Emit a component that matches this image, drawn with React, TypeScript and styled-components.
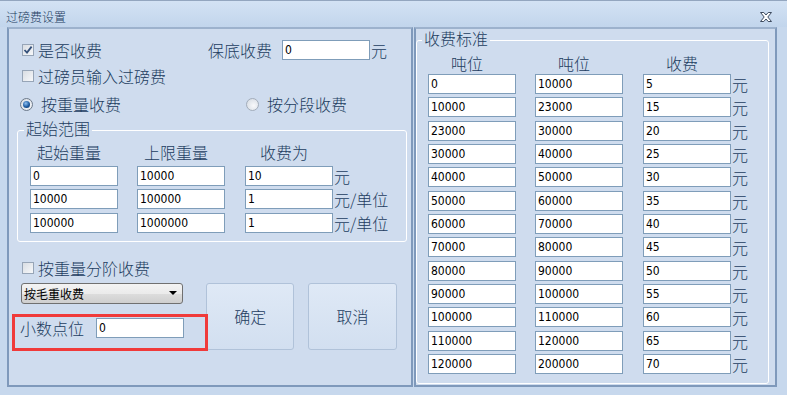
import React from "react";
import styled, { createGlobalStyle } from "styled-components";

const CJK = `"Noto Sans CJK SC", "Noto Sans", sans-serif`;
const NUM = `"DejaVu Sans Condensed", "Liberation Sans", sans-serif`;
const INK = "#223c60";

const GlobalStyle = createGlobalStyle`
  html, body {
    margin: 0;
    padding: 0;
  }
  body {
    width: 787px;
    height: 395px;
    overflow: hidden;
    background: #c7d8ed;
  }
`;

const rangeRows = [
  ["0", "10000", "10", "元"],
  ["10000", "100000", "1", "元/单位"],
  ["100000", "1000000", "1", "元/单位"],
];

const feeRows = [
  ["0", "10000", "5"],
  ["10000", "23000", "15"],
  ["23000", "30000", "20"],
  ["30000", "40000", "25"],
  ["40000", "50000", "30"],
  ["50000", "60000", "35"],
  ["60000", "70000", "40"],
  ["70000", "80000", "45"],
  ["80000", "90000", "50"],
  ["90000", "100000", "55"],
  ["100000", "110000", "60"],
  ["110000", "120000", "65"],
  ["120000", "200000", "70"],
];

const CheckBox: React.FC<{ checked?: boolean }> = ({ checked }) => (
  <Box>
    {checked && (
      <svg width="10" height="10" viewBox="0 0 10 10">
        <path d="M1.5 5 L4 7.6 L8.6 1.6" fill="none" stroke="#34507a" strokeWidth="1.8" />
      </svg>
    )}
  </Box>
);

const CloseIcon = () => (
  <svg width="12" height="10" viewBox="0 0 12 10">
    <polygon
      points="0.5,0.5 3.8,0.5 6,3 8.2,0.5 11.5,0.5 7.8,5 11.5,9.5 8.2,9.5 6,7 3.8,9.5 0.5,9.5 4.2,5"
      fill="#ffffff"
      stroke="#3d4b5f"
      strokeWidth="1"
    />
  </svg>
);

const App: React.FC = () => {
  return (
    <Window>
      <GlobalStyle />
      <TitleBar>
        <span>过磅费设置</span>
        <CloseIcon />
      </TitleBar>
      <Body>
        <Panel $w={406}>
          <Row $top={11}>
            <CheckItem $w={186}>
              <CheckBox checked />
              <Label>是否收费</Label>
            </CheckItem>
            <Label style={{ width: 74 }}>保底收费</Label>
            <TextBox readOnly value="0" />
            <Unit>元</Unit>
          </Row>
          <Row $top={6}>
            <CheckItem $w={186}>
              <CheckBox />
              <Label>过磅员输入过磅费</Label>
            </CheckItem>
          </Row>
          <Row $top={8} $left={11}>
            <RadioItem $w={226}>
              <Radio $on />
              <Label>按重量收费</Label>
            </RadioItem>
            <RadioItem>
              <Radio />
              <Label>按分段收费</Label>
            </RadioItem>
          </Row>

          <Group $w={390} $ml={8} $mt={5} $pl={12} $pb={8}>
            <Legend>起始范围</Legend>
            <Grid $cols="107px 108px 88px auto" $gap={3.5}>
              <Head>起始重量</Head>
              <Head>上限重量</Head>
              <Head>收费为</Head>
              <span />
              {rangeRows.map((r, i) => (
                <React.Fragment key={i}>
                  <TextBox readOnly value={r[0]} />
                  <TextBox readOnly value={r[1]} />
                  <TextBox readOnly value={r[2]} />
                  <Unit>{r[3]}</Unit>
                </React.Fragment>
              ))}
            </Grid>
          </Group>

          <Row $top={16}>
            <CheckItem $w={186}>
              <CheckBox />
              <Label>按重量分阶收费</Label>
            </CheckItem>
          </Row>

          <Bottom>
            <BottomLeft>
              <Select>
                <span>按毛重收费</span>
                <Arrow />
              </Select>
              <DecimalRow>
                <Label style={{ width: 76 }}>小数点位</Label>
                <TextBox readOnly value="0" />
              </DecimalRow>
            </BottomLeft>
            <Button $w={88}>确定</Button>
            <Button $w={89}>取消</Button>
          </Bottom>
          <Highlight />
        </Panel>

        <Panel $w={363}>
          <Group $w={353} $ml={0} $mt={0} $pl={11} $pb={9}>
            <Legend>收费标准</Legend>
            <HeadRow>
              <Head>吨位</Head>
              <Head style={{ marginLeft: 19 }}>吨位</Head>
              <Head style={{ marginLeft: 20 }}>收费</Head>
            </HeadRow>
            <Grid $cols="107px 108px 88px auto" $gap={3.33}>
              {feeRows.map((r, i) => (
                <React.Fragment key={i}>
                  <TextBox readOnly value={r[0]} />
                  <TextBox readOnly value={r[1]} />
                  <TextBox readOnly value={r[2]} />
                  <Unit>元</Unit>
                </React.Fragment>
              ))}
            </Grid>
          </Group>
        </Panel>
      </Body>
    </Window>
  );
};
export default App;

const Window = styled.div`
  width: 787px;
  height: 395px;
  box-sizing: border-box;
  display: flex;
  flex-direction: column;
  background: #c7d8ed;
  border-top: 1px solid #93a6bf;
  font-family: ${CJK};
  font-weight: 300;
  color: ${INK};
`;

const TitleBar = styled.div`
  height: 26px;
  flex: none;
  box-sizing: border-box;
  display: flex;
  align-items: center;
  justify-content: space-between;
  padding: 5px 15px 0 6px;
  background: linear-gradient(#d3e2f4, #c2d5ec);
  font-size: 12px;
  line-height: 14px;
`;

const Body = styled.div`
  flex: 1;
  display: flex;
  gap: 1px;
  padding: 0 10px 8px 7px;
  min-height: 0;
`;

const Panel = styled.div<{ $w: number }>`
  position: relative;
  width: ${(p) => p.$w}px;
  flex: none;
  box-sizing: border-box;
  border: 2px solid #7f99bb;
  border-top-color: #9db2cd;
  background: #cfdcee;
  display: flex;
  flex-direction: column;
`;

const Row = styled.div<{ $top: number; $left?: number }>`
  display: flex;
  align-items: center;
  height: 20px;
  margin-top: ${(p) => p.$top}px;
  padding-left: ${(p) => p.$left ?? 13}px;
`;

const Label = styled.span`
  font-size: 16px;
  line-height: 20px;
  white-space: nowrap;
  flex: none;
`;

const Unit = styled(Label)`
  margin-left: 1px;
`;

const CheckItem = styled.div<{ $w?: number }>`
  display: flex;
  align-items: center;
  gap: 4px;
  width: ${(p) => (p.$w ? `${p.$w}px` : "auto")};
  flex: none;
`;

const RadioItem = styled(CheckItem)`
  gap: 8px;
`;

const Box = styled.span`
  width: 12px;
  height: 12px;
  box-sizing: border-box;
  border: 1px solid #97a5b7;
  background: linear-gradient(135deg, #d9dde3, #f7f8fa);
  display: flex;
  align-items: center;
  justify-content: center;
  flex: none;
`;

const Radio = styled.span<{ $on?: boolean }>`
  width: 13px;
  height: 13px;
  box-sizing: border-box;
  border-radius: 50%;
  border: 1px solid ${(p) => (p.$on ? "#6d7a8b" : "#a3adba")};
  background: radial-gradient(circle at 60% 60%, #f8f9fb, #d2d8e0);
  display: flex;
  align-items: center;
  justify-content: center;
  flex: none;
  &::after {
    content: "";
    display: ${(p) => (p.$on ? "block" : "none")};
    width: 7px;
    height: 7px;
    border-radius: 50%;
    background: radial-gradient(circle at 40% 35%, #8ec0f2, #1c5aa0 55%, #0d2f5e);
  }
`;

const TextBox = styled.input`
  width: 88px;
  height: 20px;
  box-sizing: border-box;
  border: 1px solid #7f9db9;
  background: #ffffff;
  padding: 0 2px;
  margin: 0;
  font-family: ${NUM};
  font-size: 12px;
  color: #000000;
  outline: none;
  flex: none;
`;

const Group = styled.fieldset<{ $w: number; $ml: number; $mt: number; $pl: number; $pb: number }>`
  width: ${(p) => p.$w}px;
  box-sizing: border-box;
  margin: ${(p) => p.$mt}px 0 0 ${(p) => p.$ml}px;
  padding: 0 0 ${(p) => p.$pb}px ${(p) => p.$pl}px;
  border: 1px solid #ffffff;
  border-radius: 3px;
  min-width: 0;
`;

const Legend = styled.legend`
  font-size: 16px;
  line-height: 18px;
  padding: 0 2px 4px;
  margin-left: -6px;
  color: ${INK};
`;

const Grid = styled.div<{ $cols: string; $gap: number }>`
  display: grid;
  grid-template-columns: ${(p) => p.$cols};
  row-gap: ${(p) => p.$gap}px;
  align-items: center;
  margin-top: 1px;
`;

const Head = styled.div`
  width: 88px;
  box-sizing: border-box;
  padding-right: 10px;
  text-align: center;
  font-size: 16px;
  line-height: 20px;
  white-space: nowrap;
`;

const HeadRow = styled.div`
  display: flex;
  height: 20px;
  align-items: center;
  margin: 2px 0 1px;
`;

const Bottom = styled.div`
  display: flex;
  align-items: flex-start;
  margin-top: 5px;
  padding-left: 12px;
`;

const BottomLeft = styled.div`
  width: 186px;
  display: flex;
  flex-direction: column;
`;

const Select = styled.div`
  width: 162px;
  height: 21px;
  box-sizing: border-box;
  border: 1px solid #707070;
  border-radius: 3px;
  background: linear-gradient(#f3f3f3 0%, #ebebeb 50%, #dddddd 51%, #cfcfcf 100%);
  display: flex;
  align-items: center;
  justify-content: space-between;
  padding: 0 5px 0 2px;
  font-size: 12px;
  font-weight: 400;
  color: #000000;
`;

const Arrow = styled.span`
  width: 0;
  height: 0;
  border-left: 4px solid transparent;
  border-right: 4px solid transparent;
  border-top: 4px solid #000000;
`;

const DecimalRow = styled.div`
  display: flex;
  align-items: center;
  height: 20px;
  margin-top: 14px;
  margin-left: -1px;
`;

const Button = styled.div<{ $w: number }>`
  width: ${(p) => p.$w}px;
  height: 67px;
  box-sizing: border-box;
  margin-right: 14px;
  border: 1px solid #b0c2d9;
  border-radius: 3px;
  background: linear-gradient(#dfe9f6, #d2dff0);
  display: flex;
  align-items: center;
  justify-content: center;
  font-size: 16px;
`;

const Highlight = styled.div`
  position: absolute;
  left: 3px;
  top: 285px;
  width: 196px;
  height: 37px;
  box-sizing: border-box;
  border: 3px solid #f03a3a;
  pointer-events: none;
`;
